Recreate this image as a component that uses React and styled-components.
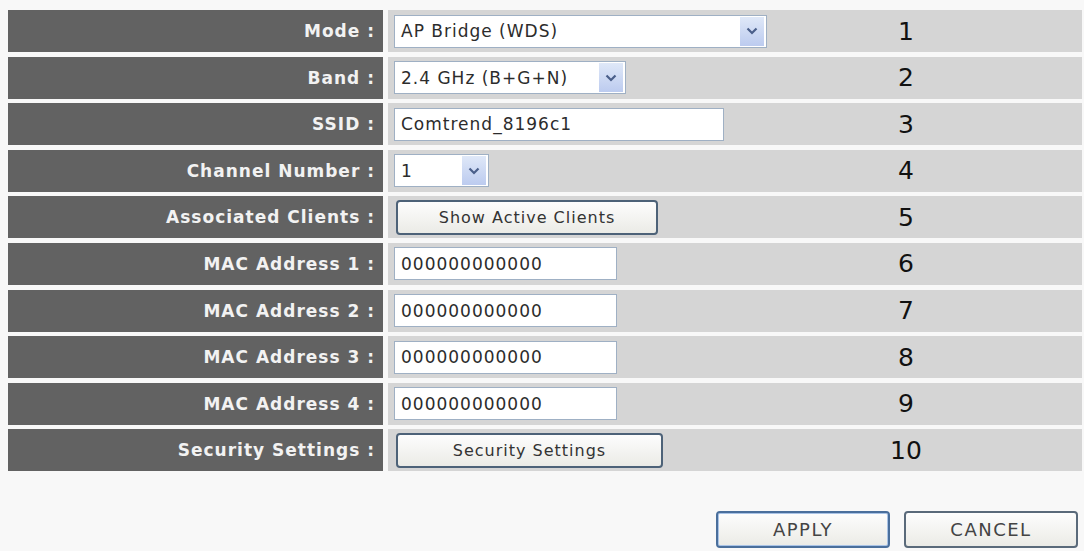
import React from 'react';
import styled, { createGlobalStyle } from 'styled-components';

const Global = createGlobalStyle`
  body {
    margin: 0;
    background: #f8f8f8;
    font-family: "DejaVu Sans", "Liberation Sans", Arial, sans-serif;
  }
`;

const Page = styled.div`
  padding: 10px 2px 0 8px;
`;

const Table = styled.div`
  display: grid;
  grid-template-columns: 375px 1fr;
  column-gap: 5px;
  row-gap: 4.6px;
`;

const Label = styled.div`
  background: #626262;
  color: #f2f2f2;
  font-weight: bold;
  font-size: 17px;
  letter-spacing: 1px;
  height: 42px;
  display: flex;
  align-items: center;
  justify-content: flex-end;
  padding-right: 8px;
`;

const Cell = styled.div`
  background: #d5d5d5;
  height: 42px;
  display: flex;
  align-items: center;
  padding-left: 6px;
  position: relative;
`;

const Field = styled.div`
  width: ${p => p.w}px;
  height: 33px;
  box-sizing: border-box;
  background: #fff;
  border: 1px solid #9fb0c4;
  display: flex;
  align-items: center;
  padding-left: 6px;
  font-size: 17px;
  letter-spacing: 1px;
  color: #2c2c2c;
  white-space: nowrap;
`;

const Value = styled.span`
  flex: 1;
`;

const Arrow = styled.span`
  width: 24px;
  height: 29px;
  margin-right: 2px;
  background: linear-gradient(#dfe8f8, #bccbef);
  display: flex;
  align-items: center;
  justify-content: center;
`;

const Button = styled.div`
  width: ${p => p.w}px;
  height: 35px;
  box-sizing: border-box;
  margin-left: 2px;
  border: 2px solid #4d6278;
  border-radius: 4px;
  background: linear-gradient(#fdfdfd, #ebebe6);
  display: flex;
  align-items: center;
  justify-content: center;
  font-size: 16px;
  letter-spacing: 1px;
  color: #333;
`;

const Num = styled.span`
  position: absolute;
  left: 500px;
  width: 36px;
  text-align: center;
  font-size: 25px;
  color: #111;
`;

const Footer = styled.div`
  display: flex;
  justify-content: flex-end;
  gap: 12px;
  padding: 40px 4px 0 0;
`;

const FootButton = styled(Button)`
  width: 174px;
  height: 37px;
  border-color: ${p => (p.primary ? '#4a6f9c' : '#5a6a7a')};
  box-shadow: ${p => (p.primary ? 'inset 0 0 0 1px #a9c3e6' : 'none')};
  font-size: 18px;
  letter-spacing: 1.5px;
  color: #444;
`;

const Chevron = () => (
  <svg width="12" height="8" viewBox="0 0 12 8">
    <path d="M1.5 1.5 L6 6 L10.5 1.5" fill="none" stroke="#4a5f8a" strokeWidth="2.2" />
  </svg>
);

const rows = [
  ['Mode :', { t: 'select', w: 373, v: 'AP Bridge (WDS)' }],
  ['Band :', { t: 'select', w: 232, v: '2.4 GHz (B+G+N)' }],
  ['SSID :', { t: 'input', w: 330, v: 'Comtrend_8196c1' }],
  ['Channel Number :', { t: 'select', w: 95, v: '1' }],
  ['Associated Clients :', { t: 'button', w: 262, v: 'Show Active Clients' }],
  ['MAC Address 1 :', { t: 'input', w: 223, v: '000000000000' }],
  ['MAC Address 2 :', { t: 'input', w: 223, v: '000000000000' }],
  ['MAC Address 3 :', { t: 'input', w: 223, v: '000000000000' }],
  ['MAC Address 4 :', { t: 'input', w: 223, v: '000000000000' }],
  ['Security Settings :', { t: 'button', w: 267, v: 'Security Settings' }],
];

export default function App() {
  return (
    <Page>
      <Global />
      <Table>
        {rows.map(([label, c], i) => (
          <React.Fragment key={label}>
            <Label>{label}</Label>
            <Cell>
              {c.t === 'button' ? (
                <Button w={c.w}>{c.v}</Button>
              ) : (
                <Field w={c.w}>
                  <Value>{c.v}</Value>
                  {c.t === 'select' && (
                    <Arrow>
                      <Chevron />
                    </Arrow>
                  )}
                </Field>
              )}
              <Num>{i + 1}</Num>
            </Cell>
          </React.Fragment>
        ))}
      </Table>
      <Footer>
        <FootButton primary>APPLY</FootButton>
        <FootButton>CANCEL</FootButton>
      </Footer>
    </Page>
  );
}
